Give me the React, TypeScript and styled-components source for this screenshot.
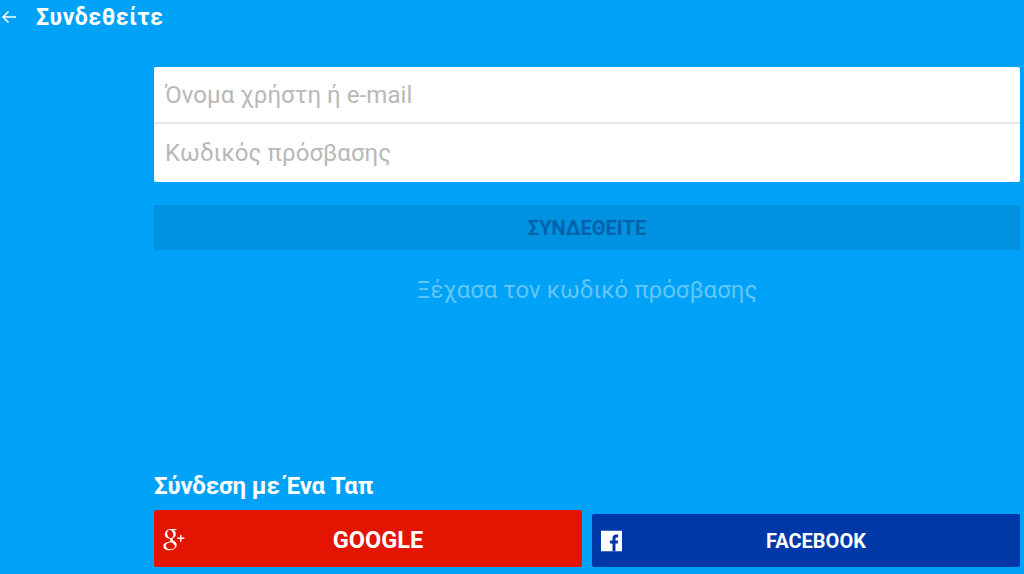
import React from "react";
import styled, { createGlobalStyle } from "styled-components";
import { TiSocialGooglePlus } from "react-icons/ti";

const Global = createGlobalStyle`
  html, body { margin: 0; padding: 0; height: 100%; background: #00a2f7; }
  body { font-family: Roboto, "Noto Sans", sans-serif; overflow: hidden; }
`;

const Page = styled.div`
  width: 1024px; height: 574px; background: #00a2f7; display: flex; flex-direction: column;
  box-sizing: border-box; overflow: hidden;
`;
const Header = styled.header`
  height: 34px; display: flex; align-items: center; padding-left: 1px; flex: none;
`;
const BackButton = styled.span`
  width: 35px; display: flex; align-items: center; color: #fff;
`;
const Title = styled.h1`
  margin: 1px 0 0; font-size: 23px; font-weight: 700; color: #fff; letter-spacing: 0.55px; line-height: 33px;
`;
const Content = styled.main`
  flex: 1; display: flex; flex-direction: column; padding: 33px 4px 7px 154px;
`;
const Fields = styled.div`
  background: #fff; border-radius: 2px; height: 115px; display: flex; flex-direction: column; flex: none;
`;
const Field = styled.div<{ $divider?: boolean }>`
  height: ${(p) => (p.$divider ? 57 : 58)}px; box-sizing: border-box; display: flex; align-items: center;
  padding-left: 11px; font-size: 24px; letter-spacing: 0.06px; color: #b8b8b8;
  border-bottom: ${(p) => (p.$divider ? "2px solid #e6e6e6" : "none")};
`;
const Submit = styled.button`
  margin-top: 23px; height: 45px; border: 0; padding: 1px 0 0; background: #0092e0; color: #0062a8;
  font-family: inherit; font-size: 20px; font-weight: 700; flex: none;
`;
const Forgot = styled.div`
  margin-top: 22px; text-align: center; font-size: 24px; line-height: 36px; letter-spacing: 0;
  color: #62c6f9; font-weight: 400;
`;
const Spacer = styled.div` flex: 1; `;
const OneTap = styled.h2`
  margin: 0 0 9px; font-size: 24px; line-height: 32px; font-weight: 700; color: #fff;
  letter-spacing: -0.15px; position: relative; top: 1px;
`;
const SocialRow = styled.div`
  display: flex; gap: 10px; align-items: flex-end;
`;
const Social = styled.button<{ $bg: string; $h: number; $fs: number; $pad: number }>`
  position: relative; flex: 1; height: ${(p) => p.$h}px; background: ${(p) => p.$bg}; border: 0; border-radius: 2px;
  color: #fff; font-family: inherit; font-weight: 700; font-size: ${(p) => p.$fs}px;
  padding: ${(p) => p.$pad}px 0 0 20px;
`;
const IconSlot = styled.span<{ $left: number }>`
  position: absolute; left: ${(p) => p.$left}px; top: 50%; transform: translateY(-50%); display: flex;
`;

export default function App() {
  return (
    <Page>
      <Global />
      <Header>
        <BackButton>
          <svg width="16" height="14" viewBox="0 0 16 14" fill="none" stroke="#fff" strokeWidth="1.5">
            <path d="M15 7H2M7.500 1.500 2 7l5.500 5.500" />
          </svg>
        </BackButton>
        <Title>Συνδεθείτε</Title>
      </Header>
      <Content>
        <Fields>
          <Field $divider>Όνομα χρήστη ή e-mail</Field>
          <Field>Κωδικός πρόσβασης</Field>
        </Fields>
        <Submit>ΣΥΝΔΕΘΕΙΤΕ</Submit>
        <Forgot>Ξέχασα τον κωδικό πρόσβασης</Forgot>
        <Spacer />
        <OneTap>Σύνδεση με Ένα Ταπ</OneTap>
        <SocialRow>
          <Social $bg="#e31500" $h={57} $fs={23.5} $pad={2}>
            <IconSlot $left={2}>
              <TiSocialGooglePlus size={34} color="#fff" />
            </IconSlot>
            GOOGLE
          </Social>
          <Social $bg="#0038a8" $h={53} $fs={20} $pad={0}>
            <IconSlot $left={9}>
              <svg width="21" height="21" viewBox="0 0 21 21">
                <rect width="21" height="21" fill="#fff" />
                <path d="M11.500 21v-8H9v-3h2.500V7.800c0-2.600 1.500-3.800 3.700-3.800h2v3h-1.300c-1 0-1.400.5-1.400 1.300V10h2.700l-.4 3h-2.300v8z" fill="#0038a8" />
              </svg>
            </IconSlot>
            FACEBOOK
          </Social>
        </SocialRow>
      </Content>
    </Page>
  );
}
